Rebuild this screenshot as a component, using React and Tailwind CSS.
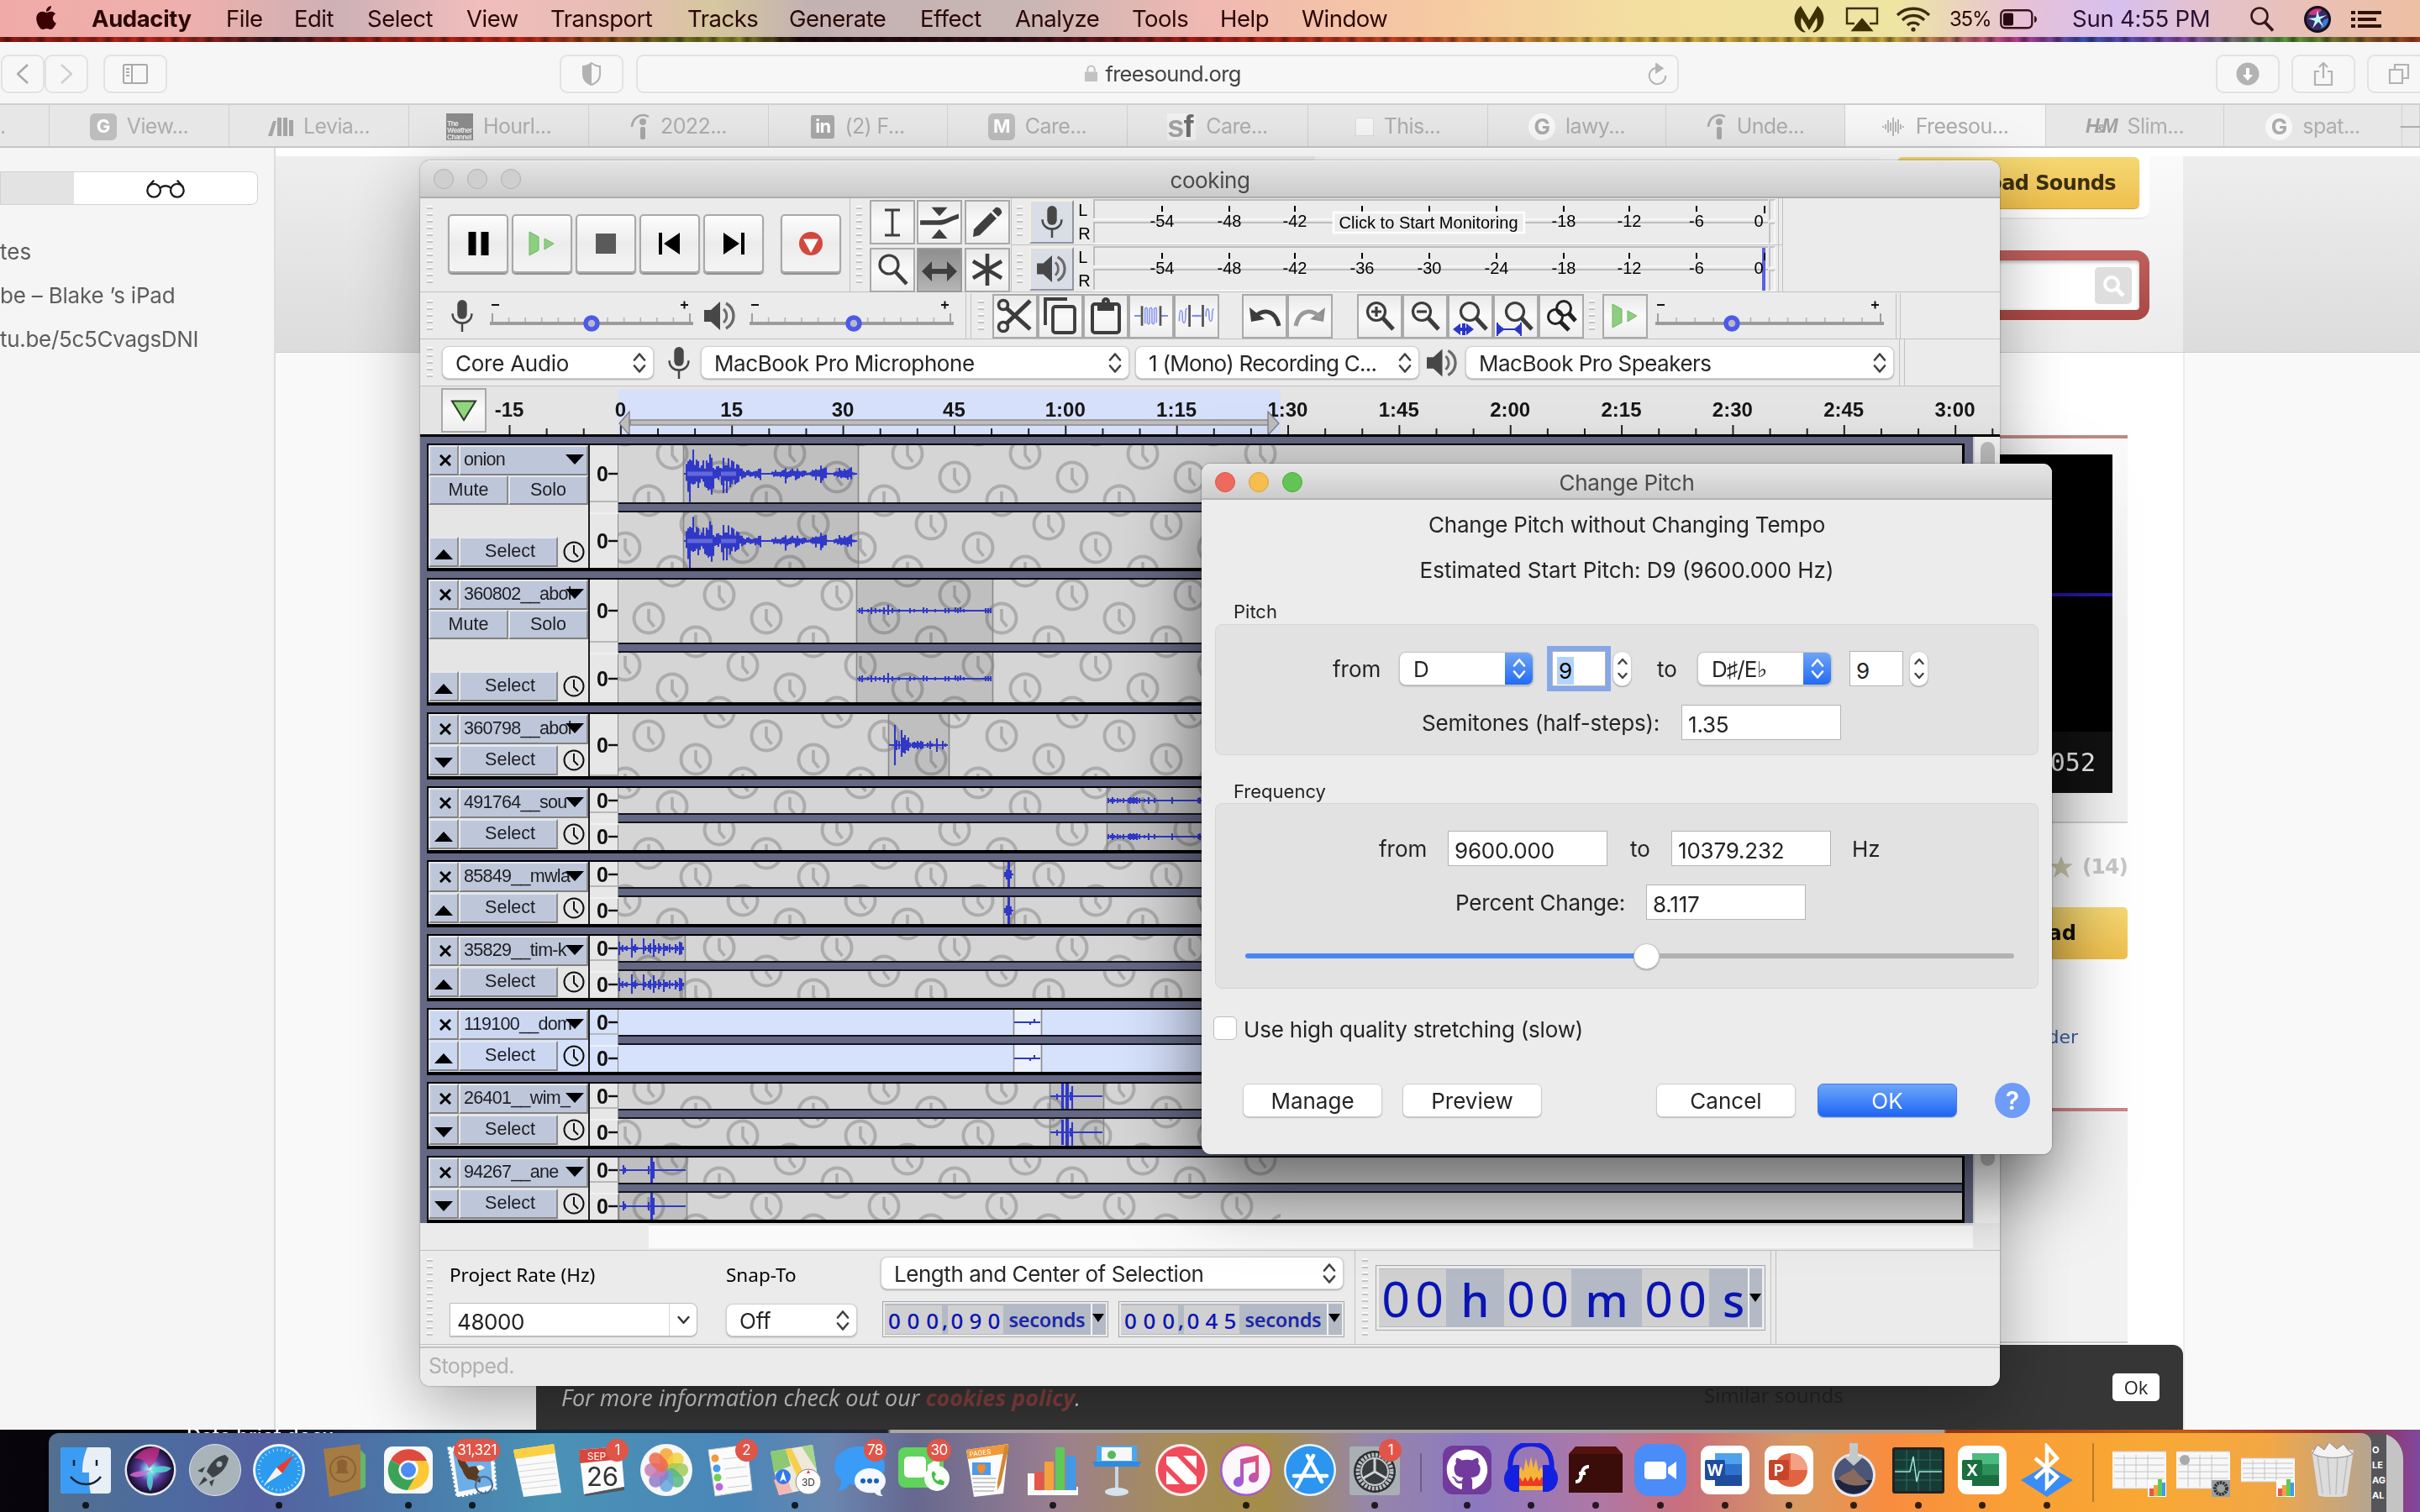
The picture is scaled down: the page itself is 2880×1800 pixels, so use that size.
import React from "react";
import { FaApple, FaGithub } from "react-icons/fa";

/* ---------- shared pieces ---------- */

const Grip = ({ n = 9, className = "" }) => (
  <div className={"flex w-[7px] shrink-0 flex-col gap-[6px] " + className}>
    {Array.from({ length: n }, (_, i) => (
      <div key={i} className="h-[2px] w-[7px] bg-[#c4c4c4] shadow-[0_-2px_0_#fafafa]" />
    ))}
  </div>
);

const VSep = ({ className = "" }) => <div className={"w-px shrink-0 self-stretch bg-[#c2c2c2] " + className} />;

const MicIcon = ({ className = "" }) => (
  <svg viewBox="0 0 28 42" className={className}>
    <rect x="8" y="1" width="12" height="24" rx="6" fill="#474747" />
    <path d="M2 18c0 16 24 16 24 0M14 30v11" fill="none" stroke="#474747" strokeWidth="2.6" />
  </svg>
);

const SpeakerIcon = ({ className = "" }) => (
  <svg viewBox="0 0 38 36" className={className}>
    <path d="M0 11h8L19 1v34L8 25H0z" fill="#474747" />
    <path d="M23 10c5 4 5 12 0 16" fill="none" stroke="#6a6a6a" strokeWidth="3" />
    <path d="M26 3c12 7 12 23 0 30" fill="none" stroke="#6a6a6a" strokeWidth="3.4" />
  </svg>
);

const UpDown = ({ className = "" }) => (
  <svg viewBox="0 0 16 24" className={className} fill="none" stroke="currentColor" strokeWidth="2.6" strokeLinecap="round" strokeLinejoin="round">
    <path d="M2 8.500l6-7 6 7M2 15.500l6 7 6-7" />
  </svg>
);

const Popup = ({ children, className = "" }) => (
  <div className={"flex h-[39px] shrink-0 items-center justify-between rounded-[8px] border border-[#cfcfcf] bg-white pt-[2px] pl-[15px] pr-[8px] text-[26px] tracking-[-0.250px] text-[#262626] shadow-[0_1px_2px_rgba(0,0,0,0.3)] " + className}>
    <span className="whitespace-nowrap">{children}</span>
    <UpDown className="-mt-[2px] h-[24px] w-[16px] shrink-0 text-[#404040]" />
  </div>
);

/* ---------- menu bar ---------- */

const menus = [
  ["File", "w-[81px]"], ["Edit", "w-[87px]"], ["Select", "w-[118px]"], ["View", "w-[100px]"],
  ["Transport", "w-[163px]"], ["Tracks", "w-[121px]"], ["Generate", "w-[156px]"], ["Effect", "w-[113px]"],
  ["Analyze", "w-[139px]"], ["Tools", "w-[105px]"], ["Help", "w-[97px]"], ["Window", "w-[120px]"],
];

const MenuBar = () => (
  <div className="flex h-[44px] items-center bg-[linear-gradient(90deg,#f0aba8_0px,#eeb0ac_220px,#cdb1b5_400px,#f1bdbd_570px,#e6bdb2_740px,#d5c79f_850px,#c3b2b2_960px,#c8b6b4_1220px,#f0b8b2_1430px,#f6c9a2_1700px,#f3dfa0_1950px,#eee5a3_2260px,#e6c1d8_2410px,#d7c0ee_2520px,#e6c2c8_2640px,#edbfa2_2880px)] pt-[2px] pr-[46px] text-[27.500px] text-[#2a0806]">
    <div className="flex w-[109px] shrink-0 pl-[41px]"><FaApple className="-mt-1 h-[32px] w-[28px] text-[#3a0303]" /></div>
    <div className="w-[160px] shrink-0 text-[27.500px] font-bold tracking-[-0.4px]">Audacity</div>
    {menus.map(([m, w]) => (
      <div key={m} className={"shrink-0 whitespace-nowrap tracking-[-0.5px] " + w}>{m}</div>
    ))}
    <div className="grow" />
    <svg viewBox="0 0 36 32" className="mr-[25px] h-[32px] w-[36px]">
      <path d="M8 0l10 17L28 0c9 8 10 20 2 28-3 3-6 4-8 3 5-3 7-9 5-17l-9 15-9-15c-2 8 0 14 5 17-2 1-5 0-8-3C-2 20-1 8 8 0z" fill="#3e3100" />
    </svg>
    <svg viewBox="0 0 40 30" className="mr-[20px] h-[30px] w-[40px]" fill="none" stroke="#3e3100" strokeWidth="2.400">
      <path d="M11 20H2V2h36v18h-9" /><path d="M20 15l11 13H9z" fill="#3e3100" />
    </svg>
    <svg viewBox="0 0 42 30" className="mr-[22px] h-[30px] w-[42px]" fill="none" stroke="#3e2b10" strokeWidth="3.400">
      <path d="M2 10a27 27 0 0 1 38 0M8 16a18 18 0 0 1 26 0M14 22a10 10 0 0 1 14 0" /><circle cx="21" cy="27" r="2.600" fill="#3e2b10" stroke="none" />
    </svg>
    <div className="w-[60px] shrink-0 text-[24px] tracking-[-1.200px]">35%</div>
    <svg viewBox="0 0 46 24" className="mr-[40px] h-[24px] w-[46px]">
      <rect x="1.300" y="1.300" width="37" height="21" rx="5" fill="none" stroke="#3a1018" strokeWidth="2.400" />
      <rect x="4" y="4.500" width="12" height="15" rx="2" fill="#2a0a12" /><path d="M41 8c4 1 4 7 0 8z" fill="#3a1018" />
    </svg>
    <div className="w-[210px] shrink-0 whitespace-nowrap tracking-[-0.250px] text-[#2a1030]">Sun 4:55 PM</div>
    <svg viewBox="0 0 32 30" className="mr-[34px] h-[30px] w-[32px]" fill="none" stroke="#35151a" strokeWidth="2.600">
      <circle cx="13" cy="11" r="9.500" /><path d="M19.500 18.500L29 28.500" strokeWidth="3.600" />
    </svg>
    <svg viewBox="0 0 32 32" className="mr-[24px] h-[32px] w-[32px] shrink-0">
      <circle cx="16" cy="16" r="16" fill="#141018" /><circle cx="16" cy="16" r="13" fill="#3a2a66" />
      <path d="M5 10a13 13 0 0 1 16-6c-2 6-8 8-16 6z" fill="#d2357f" /><path d="M20 27c6-2 9-7 9-12-6 0-9 6-9 12z" fill="#3a7bd8" />
      <path d="M16 5l2 8 9-2-8 5 4 9-6-6-7 8 3-9-8-3 9-1z" fill="#b9fbf3" />
    </svg>
    <svg viewBox="0 0 36 22" className="h-[22px] w-[36px] shrink-0" fill="#2e1200">
      <path d="M0 1h5v4H0zM8 1h28v4H8zM0 9h5v4H0zM8 9h22v4H8zM0 17h5v4H0zM8 17h28v4H8z" />
    </svg>
  </div>
);

/* ---------- browser ---------- */

const tabs = [
  ["w-[59px]", "none", "."], ["w-[214px]", "G", "View..."], ["w-[214px]", "bars", "Levia..."], ["w-[214px]", "wc", "Hourl..."],
  ["w-[214px]", "i", "2022..."], ["w-[213px]", "in", "(2) F..."], ["w-[214px]", "M", "Care..."], ["w-[215px]", "sf", "Care..."],
  ["w-[214px]", "page", "This..."], ["w-[212px]", "Gc", "lawy..."], ["w-[213px]", "i", "Unde..."], ["w-[239px]", "wave", "Freesou..."],
  ["w-[212px]", "hm", "Slim..."], ["w-[212px]", "Gc", "spat..."], ["w-[21px]", "none", "—"],
];

const TabIcon = ({ k }) => {
  switch (k) {
    case "G":
    case "M":
      return <div className="flex h-[32px] w-[32px] items-center justify-center rounded-[6px] bg-[#bdbdbd] text-[22px] font-bold text-white">{k}</div>;
    case "in":
      return <div className="flex h-[28px] w-[28px] items-center justify-center rounded-[3px] bg-[#a8a8a8] text-[22px] font-bold text-white">in</div>;
    case "bars":
      return <svg viewBox="0 0 30 24" className="h-[24px] w-[30px]" fill="#a4a4a4"><path d="M0 23L6 5h4L5 23zM11 1h5v22h-5zM18 1h5v22h-5zM25 4h5v19h-5z" /></svg>;
    case "wc":
      return <div className="flex h-[32px] w-[32px] flex-col justify-end bg-[#8b8b8b] pl-[1px] text-[8px] leading-[8px] font-bold text-[#e8e8e8]"><span>The</span><span className="tracking-[-0.5px]">Weather</span><span className="tracking-[-0.5px]">Channel</span></div>;
    case "i":
      return <svg viewBox="0 0 24 32" className="h-[32px] w-[24px]"><path d="M2 16C3 4 14-1 22 4" fill="none" stroke="#a8a8a8" strokeWidth="2.500" /><circle cx="15" cy="10" r="4" fill="#a8a8a8" /><rect x="12" y="16" width="6" height="15" rx="2" fill="#a8a8a8" /></svg>;
    case "sf":
      return <div className="flex h-[32px] w-[34px] items-center bg-[#f0f0f0] font-['Liberation_Sans'] text-[36px] font-bold tracking-[-1px] text-[#a2a2a2]">s<span className="text-[#6c6c6c]">f</span></div>;
    case "page":
      return <div className="h-[22px] w-[22px] border border-[#ddd] bg-[#f5f5f5]" />;
    case "Gc":
      return <div className="flex h-[32px] w-[32px] items-center justify-center rounded-full bg-[#f7f7f7] text-[26px] font-bold text-[#ababab]">G</div>;
    case "wave":
      return <svg viewBox="0 0 26 24" className="h-[24px] w-[26px]" stroke="#b8b8b8" strokeWidth="2" ><path d="M1 11v2M4 9v6M7 4v15M10 7v10M13 1v22M16 6v12M19 3v17M22 9v6M25 11v2" /></svg>;
    case "hm":
      return <div className="pr-[3px] font-['Liberation_Sans'] text-[23px] font-bold tracking-[-4px] text-[#a0a0a0] italic">H<span className="text-[15px]">&amp;</span>M</div>;
    default:
      return null;
  }
};

const ToolBtn = ({ className = "", children }) => (
  <div className={"flex h-[46px] shrink-0 items-center justify-center rounded-[9px] border-2 border-[#e2e2e2] bg-[#f7f7f7] " + className}>{children}</div>
);

const BrowserBar = () => (
  <div className="flex h-[75px] items-center border-b-2 border-[#cfcfcf] bg-[#f6f6f6] pt-[2px]">
    <ToolBtn className="ml-px w-[52px]"><svg viewBox="0 0 14 24" className="h-[24px] w-[14px]" fill="none" stroke="#a8a8a8" strokeWidth="2.600"><path d="M13 1L1 12l12 11" /></svg></ToolBtn>
    <ToolBtn className="w-[52px]"><svg viewBox="0 0 14 24" className="h-[24px] w-[14px]" fill="none" stroke="#cfcfcf" strokeWidth="2.600"><path d="M1 1l12 11L1 23" /></svg></ToolBtn>
    <ToolBtn className="ml-[18px] w-[76px]">
      <svg viewBox="0 0 30 24" className="h-[24px] w-[30px]" fill="none" stroke="#a9a9a9" strokeWidth="2"><rect x="1" y="1" width="28" height="22" rx="1.500" /><path d="M11 1v22M4 6h4M4 10h4M4 14h4" /></svg>
    </ToolBtn>
    <ToolBtn className="ml-[467px] w-[76px]">
      <svg viewBox="0 0 24 28" className="h-[28px] w-[24px]"><path d="M12 1c4 3 7 4 10 4v10c0 6-5 10-10 12C7 25 2 21 2 15V5c3 0 6-1 10-4z" fill="none" stroke="#b2b2b2" strokeWidth="2" /><path d="M12 1v26C7 25 2 21 2 15V5c3 0 6-1 10-4z" fill="#b2b2b2" /></svg>
    </ToolBtn>
    <ToolBtn className="relative ml-[15px] w-[1241px]">
      <svg viewBox="0 0 18 22" className="ml-[12px] mr-[8px] h-[21px] w-[17px]"><rect x="1" y="9" width="16" height="12" rx="1" fill="#c2c2c2" /><path d="M4.500 9V6a4.500 4.500 0 0 1 9 0v3" fill="none" stroke="#c2c2c2" strokeWidth="2.200" /></svg>
      <span className="pt-[2px] text-[25.500px] tracking-[-0.700px] text-[#444]">freesound.org</span>
      <svg viewBox="0 0 26 28" className="absolute right-[12px] h-[26px] w-[24px]" fill="none" stroke="#b5b5b5" strokeWidth="2.200"><path d="M18 7a10.500 10.500 0 1 0 6 9" /><path d="M12 1l8 6-8 5z" fill="#b5b5b5" /></svg>
    </ToolBtn>
    <ToolBtn className="ml-[639px] w-[76px]">
      <svg viewBox="0 0 28 28" className="h-[28px] w-[28px]"><circle cx="14" cy="14" r="13.500" fill="#b3b3b3" /><path d="M12 7h4v8h4l-6 7-6-7h4z" fill="#fff" /></svg>
    </ToolBtn>
    <ToolBtn className="ml-[14px] w-[76px]">
      <svg viewBox="0 0 24 30" className="h-[30px] w-[24px]" fill="none" stroke="#b3b3b3" strokeWidth="2.200"><path d="M7 12H2v16h20V12h-5M12 20V2M7 7l5-5 5 5" /></svg>
    </ToolBtn>
    <ToolBtn className="ml-[14px] w-[76px]">
      <svg viewBox="0 0 26 26" className="h-[26px] w-[26px]" fill="none" stroke="#b3b3b3" strokeWidth="2.200"><path d="M2 8h15v16H2zM8 8V2h16v16h-7" /></svg>
    </ToolBtn>
  </div>
);

const TabBar = () => (
  <div className="flex h-[51px] overflow-hidden border-b-2 border-[#c6c6c6]">
    {tabs.map(([w, k, t], i) => (
      <div key={i} className={"flex shrink-0 items-center justify-center border-r border-[#d0d0d0] pt-[2px] text-[25px] tracking-[-0.600px] text-[#adadad] " + w + " " + (i === 0 ? "!justify-start " : "") + (k === "wave" ? "gap-[14px] bg-[#f6f6f6]" : "gap-[12px] bg-[#e7e7e7]")}>
        <TabIcon k={k} />
        <span className="whitespace-nowrap">{t}</span>
      </div>
    ))}
  </div>
);

const Sidebar = () => (
  <div className="h-[1526px] w-[328px] shrink-0 border-r-2 border-[#dcdcdc] bg-[#f5f5f5] text-[26px] text-[#5d5d5d]">
    <div className="mt-[28px] flex h-[40px] w-[307px] overflow-hidden rounded-r-[8px] border border-[#d2d2d2] bg-white">
      <div className="w-[87px] bg-[#e3e3e3]" />
      <div className="flex grow items-center justify-center">
        <svg viewBox="0 0 54 26" className="h-[24px] w-[52px]" fill="none" stroke="#1b1b1b" strokeWidth="2.500"><circle cx="12" cy="16" r="8.500" /><circle cx="42" cy="16" r="8.500" /><path d="M20 13c4-4 10-4 14 0M4 12L12 3M50 12L42 3" /></svg>
      </div>
    </div>
    <div className="mt-[36px] h-[38px]">tes</div>
    <div className="mt-[14px] h-[38px] whitespace-nowrap tracking-[-0.200px]">be – Blake ’s iPad</div>
    <div className="mt-[14px] h-[38px] whitespace-nowrap tracking-[-0.300px]">tu.be/5c5CvagsDNI</div>
  </div>
);

const WebPage = () => (
  <div className="relative h-[1526px] grow overflow-hidden bg-[#f9f9f9]">
    <div className="h-[10px] bg-white" />
    <div className="flex h-[234px] border-b border-[#d0d0d0] bg-gradient-to-b from-[#eeeeee] to-[#dcdcdc]">
      <div className="ml-[1237px] flex w-[1033px] flex-col items-end bg-gradient-to-b from-[#fafafa] to-[#ebebeb] pr-[40px] font-['DejaVu_Sans']">
        <div className="flex h-[75px] w-[320px] justify-end rounded-b-[10px] border-b-2 border-[#e8e8e8] bg-white pr-[12px]">
          <div className="mt-[1px] flex h-[61px] w-[288px] items-center justify-end rounded-[6px] bg-gradient-to-b from-[#f5d874] to-[#efbf4b] pr-[28px] text-[24px] font-bold tracking-[-0.600px] whitespace-nowrap text-[#3b2f10] shadow-[0_1px_1px_#c99a30]">Upload Sounds</div>
        </div>
        <div className="mt-[37px] flex h-[83px] w-[700px] rounded-[16px] bg-gradient-to-b from-[#c0605d] to-[#a94744] p-[12px]">
          <div className="flex grow items-center justify-end rounded-[4px] bg-white pr-[9px] shadow-[inset_0_2px_4px_rgba(0,0,0,0.3)]">
            <div className="flex h-[44px] w-[44px] items-center justify-center rounded-[5px] bg-[#dedede]">
              <svg viewBox="0 0 28 28" className="h-[28px] w-[28px]" fill="none" stroke="#fff" strokeWidth="4"><circle cx="12" cy="12" r="8" /><path d="M18 18l8 8" strokeWidth="5" /></svg>
            </div>
          </div>
        </div>
      </div>
    </div>
    <div className="ml-[310px] flex h-[1282px] w-[1962px] flex-col items-end border-r-2 border-[#ececec] bg-white pr-[66px] font-['DejaVu_Sans']">
      <div className="mt-[98px] h-[462px] w-[1200px] border-t-4 border-b-2 border-t-[#c08886] border-b-[#d0d0d0] bg-gradient-to-b from-[#fafafa] via-[#f2f2f2] to-[#f2f2f2] pt-[19px] pr-[18px]">
        <div className="flex h-[330px] items-center bg-black pt-[76px]"><div className="-mt-[72px] h-[4px] w-full bg-[#2a16a8]" /></div>
        <div className="flex h-[73px] items-center justify-end bg-[#111] pr-[20px] font-['DejaVu_Sans_Mono'] text-[30px] text-[#f0f0f0]">00:00:052</div>
      </div>
      <div className="mt-[32px] flex h-[40px] items-center gap-[8px] text-[25px] font-bold text-[#c8c8c8]">
        <svg viewBox="0 0 68 32" className="h-[30px] w-[64px]" fill="#cfcdb0"><path d="M16 2l4 10h11l-9 7 4 11-10-7-10 7 4-11-9-7h11zM50 2l4 10h11l-9 7 4 11-10-7-10 7 4-11-9-7h11z" /></svg>
        <span className="tracking-[-0.900px]">(14)</span>
      </div>
      <div className="mt-[28px] flex h-[62px] w-[320px] items-center justify-end rounded-[5px] bg-gradient-to-b from-[#f5d874] to-[#efbf4b] pr-[61px] text-[24px] font-bold text-[#111]">Download</div>
      <div className="mt-[76px] h-[36px] pr-[59px] text-[22px] text-[#3a62a8]">Report uploader</div>
      <div className="mt-[65px] h-[280px] w-[1100px] border-t-4 border-b-2 border-t-[#c9858a] border-b-[#cccccc] bg-[#f2f2f2]" />
    </div>
    <div className="absolute bottom-0 left-[310px] h-[101px] w-[1960px] rounded-tr-[12px] bg-[#363636] font-['Open_Sans']">
      <div className="flex items-start justify-between pt-[34px] pr-[28px]">
        <div className="mt-[9px] pl-[30px] text-[27px] leading-[40px] font-medium whitespace-nowrap text-[#d2d2d2] italic">For more information check out our <span className="font-bold text-[#84403f]">cookies policy</span>.</div>
        <div className="flex h-[33px] w-[56px] items-center justify-center rounded-[5px] bg-white text-[22px] text-[#222]">Ok</div>
      </div>
    </div>
    <div className="absolute bottom-[26px] left-[1700px] font-['Noto_Sans'] text-[24px] leading-[30px] text-[#252528]">Similar sounds</div>
  </div>
);

/* ---------- audio editor toolbars ---------- */

const BigBtn = ({ children, className = "" }) => (
  <div className={"-mt-[3px] flex h-[70px] w-[72px] shrink-0 items-center justify-center rounded-[5px] border-2 border-[#a8a8a8] bg-gradient-to-b from-[#fdfdfd] via-[#ececec] to-[#f4f4f4] shadow-[0_2px_1px_#8f8f8f] " + className}>{children}</div>
);

const Tile = ({ children, pressed, className = "" }) => (
  <div className={"flex h-[53px] w-[54px] shrink-0 items-center justify-center border-2 bg-gradient-to-b " + (pressed ? "border-[#9a9a9a] from-[#8f8f8f] via-[#a0a0a0] to-[#b5b5b5] " : "border-[#a9a9a9] from-[#e9e9e9] via-[#fafafa] to-[#ededed] ") + className}>{children}</div>
);

const PlayAt = () => (
  <svg viewBox="0 0 32 30" className="h-[30px] w-[32px]"><path d="M1 1l11 6v16L1 29z" fill="#8ccf7f" stroke="#6fb562" /><path d="M19 9l11 6-11 7z" fill="#8ccf7f" stroke="#77b56b" /></svg>
);

const meterTicks = [["-54", 82], ["-48", 162], ["-42", 240], ["-36", 320], ["-30", 400], ["-24", 480], ["-18", 560], ["-12", 638], ["-6", 718]];

const Meter = ({ play }) => (
  <div className="flex h-[56px] items-center border-b border-[#c2c2c2]">
    <Grip n={5} className="ml-[6px]" />
    <div className="ml-[8px] flex h-[52px] w-[54px] items-center justify-center border-2 border-t-[#f4efdc] border-r-[#8f95a3] border-b-[#8f95a3] border-l-[#f4efdc] bg-[#d9dde6]">
      {play ? <SpeakerIcon className="h-[34px] w-[36px]" /> : <MicIcon className="h-[40px] w-[28px]" />}
    </div>
    <div className="ml-[5px] flex h-[52px] w-[18px] flex-col justify-between font-['Liberation_Sans'] text-[20px] leading-[24px] text-black"><span>L</span><span>R</span></div>
    <div className="h-[54px] w-[804px]">
      <svg viewBox="0 0 804 54" className="h-[54px] w-[804px] font-['Liberation_Sans'] text-[20px]" textAnchor="middle">
        <path d="M1 25V1h802" fill="none" stroke="#bdbdbd" strokeWidth="2" />
        <path d="M0 24h802" stroke="#f6f6f6" strokeWidth="2" /><path d="M1 53V28h802" fill="none" stroke="#bdbdbd" strokeWidth="2" /><path d="M0 53h803" stroke="#f6f6fa" strokeWidth="2" />
        {meterTicks.map(([t, x]) => {
          const hidden = !play && (t === "-36" || t === "-30" || t === "-24");
          return (
            <g key={t}>
              <path d={"M" + x + " 8v7"} stroke="#000" strokeWidth="2" />
              {!hidden && <text x={x} y="33" fill="#000">{t}</text>}
            </g>
          );
        })}
        {play && <path d="M798 2v51" stroke="#5a62e0" strokeWidth="4" />}
        <path d="M799 8v9" stroke="#000" strokeWidth="2" /><text x="792" y="33" fill="#000">0</text>
        {!play && <g><rect x="286" y="16" width="227" height="24" fill="#ededed" stroke="#fff" strokeWidth="2.500" /><text x="399" y="35" textLength="213" fill="#000">Click to Start Monitoring</text></g>}
      </svg>
    </div>
    <div className="flex h-[54px] w-[8px] flex-col gap-[2px]"><div className="grow border-2 border-r-[#f6f6f6] border-b-[#f6f6f6] border-t-[#c4c4c4] border-l-[#c4c4c4]" /><div className="grow border-2 border-r-[#f6f6f6] border-b-[#f6f6f6] border-t-[#c4c4c4] border-l-[#c4c4c4]" /></div>
    <VSep className="ml-[3px]" /><VSep className="ml-[4px]" />
  </div>
);

const Slider = ({ w, thumb, className = "" }) => (
  <svg viewBox={"0 0 " + w + " 40"} width={w} height="40" className={"shrink-0 " + className}>
    <path d={"M2 7h9M" + (w - 15) + " 7h9M" + (w - 10.5) + " 2.500v9"} stroke="#111" strokeWidth="2" />
    {Array.from({ length: 13 }, (_, i) => {
      const x = 3 + (i * (w - 7)) / 12;
      return <path key={i} d={"M" + x + " 27v" + (i % 12 === 0 ? -10 : -5)} stroke={i % 12 === 0 ? "#8c8c8c" : "#b4b4b4"} strokeWidth="1.600" />;
    })}
    <rect x="0" y="27" width={w} height="4" fill="#9b9b9b" />
    <circle cx={thumb} cy="29" r="7" fill="#b9b9c8" stroke="#4d5ae8" strokeWidth="5.500" />
  </svg>
);

const S = { fill: "none", stroke: "#3d3d3d", strokeWidth: 3.2 };
const Lens = ({ children, x = 20 }) => (
  <svg viewBox="0 0 50 50" className="h-[50px] w-[50px] shrink-0"><circle cx={x} cy="20" r="10.500" {...S} /><path d={"M" + (x + 8) + " 28l12 13"} stroke="#3d3d3d" strokeWidth="5" />{children}</svg>
);

const Toolbars = () => (
  <div className="bg-[#ebebeb]">
    <div className="flex h-[112px] border-b border-[#c2c2c2]">
      <Grip n={12} className="ml-[8px] self-center" />
      <div className="flex items-center">
        <BigBtn className="ml-[18px]"><svg viewBox="0 0 24 28" className="h-[28px] w-[25px]"><path d="M0 0h9v28H0zM15 0h9v28h-9z" /></svg></BigBtn>
        <BigBtn className="ml-[4px]"><PlayAt /></BigBtn>
        <BigBtn className="ml-[4px]"><div className="h-[24px] w-[24px] bg-[#5a5a5a]" /></BigBtn>
        <BigBtn className="ml-[4px]"><svg viewBox="0 0 26 26" className="h-[26px] w-[26px]"><path d="M0 0h4v26H0zM25 0v26L6 13z" /></svg></BigBtn>
        <BigBtn className="ml-[4px]"><svg viewBox="0 0 26 26" className="h-[26px] w-[26px]"><path d="M22 0h4v26h-4zM1 0v26l19-13z" /></svg></BigBtn>
        <BigBtn className="ml-[20px]"><svg viewBox="0 0 28 28" className="h-[28px] w-[28px]"><circle cx="14" cy="14" r="14" fill="#d1483f" /><path d="M5 8.500h18L14 25z" fill="#fff" /></svg></BigBtn>
      </div>
      <VSep className="ml-[10px]" />
      <Grip n={12} className="ml-[7px] self-center" />
      <div className="mt-[2px] ml-[9px] grid h-[110px] w-[167px] grid-cols-3 gap-x-[2px] gap-y-[3px]">
        <Tile><svg viewBox="0 0 24 34" className="h-[34px] w-[24px]" {...S} strokeWidth="2.800"><path d="M3 2h18M3 32h18M12 2v30" /></svg></Tile>
        <Tile><svg viewBox="0 0 50 44" className="h-[42px] w-[50px]" fill="#3f3f3f"><path d="M15 3h20l-10 11zM15 42h20L25 30zM1 19h22c10 0 14-4 26-8v6c-10 2-14 8-26 8H1z" /></svg></Tile>
        <Tile><svg viewBox="0 0 40 40" className="h-[40px] w-[40px]" fill="#3f3f3f"><path d="M3 37l1-9L24 8l7 7-20 20zM26 6l4-4c4-1 8 3 7 7l-4 4z" /></svg></Tile>
        <Tile><svg viewBox="0 0 40 40" className="h-[40px] w-[40px]"><circle cx="16" cy="14" r="11" {...S} /><path d="M24 23l13 14" stroke="#3d3d3d" strokeWidth="4.500" /></svg></Tile>
        <Tile pressed><svg viewBox="0 0 42 28" className="mt-[4px] h-[28px] w-[42px]" fill="#3f3f3f"><path d="M0 14L12 2v9h18V2l12 12-12 12v-9H12v9z" /></svg></Tile>
        <Tile><svg viewBox="0 0 40 40" className="h-[40px] w-[40px]" stroke="#3d3d3d" strokeWidth="4.600"><path d="M20 1v38M3 10l34 20M3 30l34-20" /></svg></Tile>
      </div>
      <VSep className="ml-[1px]" />
      <div className="w-[918px]"><Meter /><Meter play /></div>
    </div>

    <div className="flex h-[56px] items-center border-b border-[#c2c2c2] pt-[1px]">
      <Grip n={5} className="ml-[8px]" />
      <MicIcon className="ml-[21px] h-[40px] w-[28px]" />
      <Slider w={242} thumb={121} className="ml-[19px]" />
      <SpeakerIcon className="ml-[13px] h-[36px] w-[38px]" />
      <Slider w={243} thumb={124} className="ml-[16px]" />
      <VSep className="ml-[14px]" /><VSep className="ml-[5px]" />
      <Grip n={5} className="ml-[8px]" />
      <div className="ml-[10px] flex">
        <Tile><svg viewBox="0 0 44 44" className="h-[44px] w-[44px]" {...S} strokeWidth="3.600"><circle cx="8" cy="9" r="5.500" /><circle cx="8" cy="35" r="5.500" /><path d="M12 13l28 25M12 31L40 4" strokeWidth="5" /></svg></Tile>
        <Tile><svg viewBox="0 0 44 46" className="h-[46px] w-[44px]" {...S} strokeWidth="3.800"><path d="M4 34V3h26" /><rect x="13" y="12" width="26" height="31" rx="3" /></svg></Tile>
        <Tile><svg viewBox="0 0 44 46" className="h-[46px] w-[44px]" {...S} strokeWidth="4"><rect x="6" y="9" width="32" height="34" rx="3" /><path d="M14 9h16v6H14z" fill="#3d3d3d" /><circle cx="22" cy="6" r="3" /></svg></Tile>
        <Tile><svg viewBox="0 0 46 30" className="h-[28px] w-[42px]" fill="none" stroke="#8c9aec" strokeWidth="1.800"><path d="M1 15h9M36 15h9" stroke="#7f8fe6" strokeWidth="2.400" /><path d="M15 25V6q2-3 3 0v18q2 3 3 0V6q2-3 3 0v18q2 3 3 0V6q2-3 3 0v18" /><path d="M11 2v26M35 2v26" stroke="#555" strokeWidth="3" /></svg></Tile>
        <Tile><svg viewBox="0 0 46 30" className="h-[28px] w-[44px]" fill="none" stroke="#8c9aec" strokeWidth="1.800"><path d="M1 22q0-14 2-14t2 8 2 8 2-10 2-8M35 16q0-10 2-10t2 8 2 8 2-8 2-8" /><path d="M17 15h12" stroke="#7f8fe6" strokeWidth="2.400" /><path d="M14 1v28M31 1v28" stroke="#555" strokeWidth="3" /></svg></Tile>
      </div>
      <div className="ml-[27px] flex">
        <Tile><svg viewBox="0 0 42 28" className="h-[28px] w-[42px]"><path d="M3 4l2 17 16-3z" fill="#3d3d3d" /><path d="M8 17C16 6 33 4 38 26" {...S} strokeWidth="5" /></svg></Tile>
        <Tile><svg viewBox="0 0 42 28" className="h-[28px] w-[42px] -scale-x-100"><path d="M3 4l2 17 16-3z" fill="#8f8f8f" /><path d="M8 17C16 6 33 4 38 26" fill="none" stroke="#9a9a9a" strokeWidth="5" /></svg></Tile>
      </div>
      <div className="ml-[29px] flex">
        <Tile><Lens x={21}><path d="M15 20h12M21 14v12" {...S} /></Lens></Tile>
        <Tile><Lens x={21}><path d="M15 20h12" {...S} /></Lens></Tile>
        <Tile><Lens x={24}><path d="M4 41l9-7v5h2v-5h4v5h1v-5l9 7-9 7v-5h-1v5h-4v-5h-2v5z" fill="#2b36c8" /></Lens></Tile>
        <Tile><Lens x={24}><path d="M3 33v16M31 33v16M5 41h24M4 36l6 5-6 5zM30 36l-6 5 6 5z" fill="#2b36c8" stroke="#2b36c8" strokeWidth="2" /></Lens></Tile>
        <Tile><svg viewBox="0 0 50 50" className="h-[50px] w-[50px] shrink-0" fill="none" stroke="#222" strokeWidth="3"><circle cx="28" cy="16" r="8.500" /><circle cx="18" cy="26" r="8.500" /><path d="M34 22l8 9M24 32l10 10" strokeWidth="5" /></svg></Tile>
      </div>
      <Grip n={5} className="ml-[6px]" />
      <Tile className="ml-[9px]"><PlayAt /></Tile>
      <Slider w={272} thumb={91} className="ml-[9px]" />
      <VSep className="ml-[14px]" /><VSep className="ml-[4px]" />
    </div>

    <div className="flex h-[56px] items-center border-b border-[#c2c2c2]">
      <Grip n={5} className="ml-[8px]" />
      <Popup className="ml-[11px] w-[252px]">Core Audio</Popup>
      <MicIcon className="ml-[16px] h-[40px] w-[28px]" />
      <Popup className="ml-[12px] w-[510px] !tracking-[-0.400px]">MacBook Pro Microphone</Popup>
      <Popup className="ml-[7px] w-[338px] !tracking-[-0.700px]">1 (Mono) Recording C...</Popup>
      <SpeakerIcon className="ml-[9px] h-[36px] w-[37px]" />
      <Popup className="ml-[9px] w-[510px] !tracking-[-0.500px]">MacBook Pro Speakers</Popup>
      <VSep className="ml-[6px]" /><VSep className="ml-[5px]" />
    </div>
  </div>
);

/* ---------- timeline ---------- */

const rulerLabels = ["-15", "0", "15", "30", "45", "1:00", "1:15", "1:30", "1:45", "2:00", "2:15", "2:30", "2:45", "3:00"];

const Ruler = () => (
  <div className="flex h-[60px] border-b-[3px] border-black bg-[#e4e4e4]">
    <Tile className="mt-[2px] ml-[25px]"><svg viewBox="0 0 32 26" className="h-[26px] w-[32px]"><path d="M2 1.500h28L16 24z" fill="#8fd67d" stroke="#2d3d2a" strokeWidth="2" /></svg></Tile>
    <svg viewBox="579 460 1801 57" className="h-[57px] w-[1801px] font-['Liberation_Sans'] text-[24px] font-bold" textAnchor="middle">
      <rect x="736" y="464" width="788" height="53" fill="#d6e0fb" />
      {Array.from({ length: 41 }, (_, i) => {
        const x = 606.5 + i * 44.12;
        return <path key={i} d={"M" + x + " 517v" + (i % 3 === 0 ? -11 : -7)} stroke="#222" strokeWidth="2" />;
      })}
      <path d="M750 500h760v6H750z" fill="#bdbdbd" stroke="#8a8a8a" strokeWidth="1.500" />
      {rulerLabels.map((t, i) => (
        <text key={t} x={606 + i * 132.35} y="496" fill="#161616">{t}</text>
      ))}
      <path d="M749 490v28l-12-14zM1509 490v28l13-14z" fill="#bdbdbd" stroke="#777" strokeWidth="1.200" />
    </svg>
  </div>
);

const hash = (n) => {
  const v = Math.sin(n * 12.9898) * 43758.5453;
  return v - Math.floor(v);
};

/* Builds two-pixel bars from an envelope of [x, peak] points. */
const bars = (env, mid, seed) => {
  let d = "";
  for (let x = env[0][0]; x <= env[env.length - 1][0]; x += 2) {
    let i = 0;
    while (i < env.length - 2 && env[i + 1][0] <= x) i++;
    const [x0, a0] = env[i];
    const [x1, a1] = env[i + 1];
    const a = a0 + ((a1 - a0) * (x - x0)) / Math.max(1, x1 - x0);
    const up = a * (0.35 + 0.65 * hash(x + seed) ** 1.6);
    const dn = a * (0.35 + 0.65 * hash(x * 3 + seed) ** 1.6);
    d += "M" + x + " " + (mid - up) + "V" + (mid + dn);
  }
  return d;
};

/* Isolated spikes, each [x, up, down]. */
const spikes = (list, mid) => list.map(([x, u, dn]) => "M" + x + " " + (mid - u) + "V" + (mid + (dn === undefined ? u : dn))).join("");

const onionEnv = [[79, 2], [82, 33], [84, 36], [90, 30], [94, 20], [104, 16], [112, 30], [114, 10], [122, 9], [124, 26], [132, 22], [142, 14], [146, 7], [160, 4], [169, 9], [170, 0], [182, 0], [184, 6], [197, 6], [198, 16], [201, 6], [212, 8], [222, 7], [224, 2], [228, 3], [230, 7], [240, 10], [242, 17], [246, 14], [248, 2], [256, 1], [258, 6], [266, 8], [276, 12], [279, 4], [284, 2]];
const quiet = [[287, 3], [290, 4], [297, 2], [301, 4], [306, 3], [311, 2], [316, 4], [321, 7, 5], [326, 3], [334, 2], [347, 3], [352, 2], [363, 4, 3], [367, 3], [377, 2], [389, 3], [393, 3], [401, 4, 2], [404, 3], [407, 4, 2], [411, 2], [437, 3], [440, 3], [443, 3]];
const quiet2 = [[583, 3], [586, 2], [588, 4], [590, 2], [594, 3], [597, 2], [601, 3], [607, 3], [609, 4], [611, 3], [613, 4], [615, 3], [617, 4], [620, 3], [626, 2], [631, 4], [638, 3], [659, 4], [690, 3], [692, 4]];
const dog = [[324, 1], [329, 24, 24], [331, 6], [334, 5], [337, 18, 14], [339, 9], [341, 12, 10], [343, 6], [345, 9, 7], [347, 3], [350, 3], [352, 4], [354, 3], [356, 5], [358, 3], [360, 5], [362, 4], [368, 3], [371, 5], [373, 2], [379, 8], [386, 5], [389, 2]];
const tick = [[460, 3], [462, 6], [464, 16], [465, 16], [467, 5], [469, 1]];
const taps = [[1, 8], [3, 2], [5, 4], [8, 2], [10, 3], [16, 12, 11], [18, 3], [20, 5], [22, 2], [30, 12, 7], [32, 3], [36, 4], [38, 6], [42, 11, 10], [44, 4], [48, 6], [50, 3], [54, 6, 9], [56, 3], [58, 3], [61, 5], [64, 2], [68, 5, 6], [70, 3], [73, 8], [75, 7], [77, 2]];
const dom = [[490, 1, 3], [495, 4, 1]];
const wim = [[522, 3, 4], [528, 15], [529, 15], [533, 16], [535, 16], [538, 5], [540, 12, 16]];
const ane = [[6, 6, 5], [8, 3], [36, 5], [39, 16], [40, 16], [42, 10]];

const tracks = [
  { name: "onion", top: 530, lanes: [[68, 34], [66, 34]], tall: true, up: true, clip: [77, 285], env: onionEnv },
  { name: "360802__abol", top: 690, lanes: [[75, 37], [59, 31]], tall: true, up: true, clip: [283, 445], hits: quiet },
  { name: "360798__abol", top: 850, lanes: [[74, 37]], clip: [321, 393], hits: dog },
  { name: "491764__sou", top: 938, lanes: [[30, 15], [32, 16]], up: true, clip: [581, 800], hits: quiet2 },
  { name: "85849__mwla", top: 1026, lanes: [[30, 15], [32, 16]], up: true, clip: [458, 471], hits: tick },
  { name: "35829__tim-k", top: 1114, lanes: [[30, 15], [32, 16]], up: true, clip: [0, 79], hits: taps },
  { name: "119100__dom", top: 1202, lanes: [[30, 15], [32, 16]], up: true, sel: true, clip: [470, 503], hits: dom },
  { name: "26401__wim_", top: 1290, lanes: [[30, 15], [32, 16]], clip: [513, 577], hits: wim },
  { name: "94267__ane", top: 1378, lanes: [[30, 15], [32, 16]], clip: [0, 81], hits: ane },
];

const Lane = ({ id, y, h, mid, t, seed }) => {
  const [a, b] = t.clip;
  return (
    <svg viewBox={"0 0 1599 " + h} width="1599" height={h} className="block overflow-hidden">
      <defs>
        <pattern id={id} width="140" height="140" patternUnits="userSpaceOnUse" patternTransform={"translate(0 " + (700 - y) + ")"}>
          {[0, 1, 2, 3, 4].flatMap((k) => {
            const cx = (36 + k * 56) % 140;
            const cy = (36 + k * 28) % 140;
            return [[0, 0], [-140, 0], [0, -140], [-140, -140], [140, 0], [0, 140]].map(([dx, dy]) => (
              <g key={k + "_" + dx + "_" + dy} fill="none" stroke="#cecece" strokeWidth="4">
                <circle cx={cx + dx} cy={cy + dy} r="17.500" />
                <path d={"M" + (cx + dx) + " " + (cy + dy - 11) + "v13l6.500 8"} strokeWidth="3.600" />
              </g>
            ));
          })}
        </pattern>
      </defs>
      <rect width="1599" height={h} fill="#d5d5d5" />
      {t.sel ? <rect width="788" height={h} fill="#d6e1fc" /> : null}
      <rect x={a} width={b - a} height={h} fill={t.sel ? "#ebf1fe" : "#bfbfbf"} />
      {t.sel ? null : <rect width="788" height={h} fill={"url(#" + id + ")"} className="mix-blend-multiply" />}
      <path d={"M" + (a + 0.5) + " 0v" + h + "M" + (b + 0.5) + " 0v" + h} stroke="#8a8a8a" strokeWidth="1.600" />
      <path d={"M" + (a + 1) + " " + mid + "H" + (b - 1)} stroke="#3038c8" strokeWidth="2" />
      <path d={t.env ? bars(t.env, mid, seed) : spikes(t.hits, mid)} stroke="#3038c8" strokeWidth="2.100" />
      {t.env && <path d={"M82 " + mid + "h30M122 " + mid + "h18"} stroke="#6468d8" strokeWidth="5" />}
    </svg>
  );
};

const Face = ({ children, sel, className = "" }) => (
  <div className={"flex shrink-0 items-center justify-center overflow-hidden border-2 border-t-[#e6e8ec] border-r-[#8b8b8b] border-b-[#808080] border-l-[#e6e8ec] " + (sel ? "bg-[#cbd7f1] " : "bg-[#bec7da] ") + className}>{children}</div>
);

const TrackRow = ({ t, index }) => (
  <div className={"mb-[8px] flex w-[1830px] shrink-0 border-t-2 border-r-[3px] border-b-4 border-l-2 border-black font-['Liberation_Sans'] text-[21.500px] text-[#1d1d22] " + (t.tall ? "h-[152px]" : "h-[80px]")}>
    <div className={"flex w-[192px] shrink-0 flex-col border-r-2 border-[#1e1e1e] " + (t.sel ? "bg-[#d6e1fc]" : "bg-[#e5e5e5]")}>
      <div className="flex">
        <Face sel={t.sel} className="h-[36px] w-[36px] pl-[3px]"><svg viewBox="0 0 14 14" className="h-[14px] w-[14px]" stroke="#000" strokeWidth="3"><path d="M1 1l12 12M13 1L1 13" /></svg></Face>
        <Face sel={t.sel} className="relative h-[36px] w-[154px] !justify-start pb-[2px] pl-[4px]">
          <span className="tracking-[-0.700px] whitespace-nowrap">{t.name}</span>
          <svg viewBox="0 0 22 12" className="absolute right-[3px] h-[12px] w-[22px]"><path d="M0 0h22L11 12z" /></svg>
        </Face>
      </div>
      {t.tall && (
        <div className="flex">
          <Face className="h-[35px] w-[95px]">Mute</Face>
          <Face className="h-[35px] w-[95px]">Solo</Face>
        </div>
      )}
      <div className="grow" />
      <div className="flex items-center pb-[1px]">
        <Face sel={t.sel} className="h-[36px] w-[36px]"><svg viewBox="0 0 22 12" className={"mt-[6px] h-[12px] w-[22px] " + (t.up ? "rotate-180" : "")}><path d="M0 0h22L11 12z" /></svg></Face>
        <Face sel={t.sel} className="h-[36px] w-[118px] pb-[2px] pl-[4px]">Select</Face>
        <svg viewBox="0 0 26 26" className="ml-[6px] h-[26px] w-[26px]" fill="none" stroke="#111" strokeWidth="2"><circle cx="13" cy="13" r="11.500" /><path d="M13 5v9l5 5" /></svg>
      </div>
    </div>
    <div className={"flex w-[34px] shrink-0 flex-col justify-between border-r border-[#8a8a8a] " + (t.sel ? "bg-[#d6e1fc]" : "bg-[#e7e7e7]")}>
      {t.lanes.map(([h, mid], i) => (
        <svg key={i} viewBox={"0 0 34 " + h} width="34" height={h} className="text-[25px] font-bold">
          <text x="8" y={mid + 9} fill="#111">0</text><path d={"M22 " + mid + "h11"} stroke="#111" strokeWidth="2.400" />
          <path d={"M0 " + (i ? 1 : h - 1) + "h34"} stroke={i ? "#f4f4f4" : "#a9a9a9"} strokeWidth="1.500" />
        </svg>
      ))}
    </div>
    <div className="flex flex-col">
      {t.lanes.map(([h, mid], i) => (
        <React.Fragment key={i}>
          {i === 1 && <div className="h-[12px] border-y-2 border-[#14141c] bg-[#646884]" />}
          <Lane id={"c" + index + i} y={t.top + (i ? t.lanes[0][0] + 12 : 0)} h={h} mid={mid} t={t} seed={index} />
        </React.Fragment>
      ))}
    </div>
  </div>
);

/* ---------- selection bar ---------- */

const Digits = ({ text, className }) => (
  <div className={"flex items-center justify-around bg-[#d0d0d0] " + className}>{text.split("").map((c, i) => <span key={i}>{c}</span>)}</div>
);

const TimeBox = ({ b, className = "" }) => (
  <div className={"h-[43px] w-[269px] border border-[#a5a5a5] bg-[#ececec] p-[2px] " + className}>
    <div className="flex h-full items-center bg-[#b4bac5] text-[26px] leading-none font-medium text-[#0a14b4]">
      <Digits text="000" className="h-[34px] w-[68px] pt-[2px]" />
      <span className="w-[7px]">,</span>
      <Digits text={b} className="h-[34px] w-[66px] pt-[2px]" />
      <span className="w-[104px] pt-[2px] text-center text-[23.500px] font-semibold tracking-[-0.300px] text-[#1c28a8]">seconds</span>
      <div className="flex h-full grow items-center border-l-2 border-[#f4f4f4]"><svg viewBox="0 0 14 10" className="-mt-[4px] h-[10px] w-[14px]"><path d="M0 0h14L7 10z" /></svg></div>
    </div>
  </div>
);

const SelectionBar = () => (
  <div className="flex h-[113px] border-y border-[#c2c2c2] bg-[#ebebeb]">
    <Grip n={12} className="ml-[8px] self-center" />
    <div className="ml-[20px] w-[329px]">
      <div className="mt-[12px] h-[34px] font-['Noto_Sans'] text-[22.500px] text-black">Project Rate (Hz)</div>
      <div className="mt-[16px] flex h-[40px] w-[295px] items-center rounded-r-[8px] border border-[#bdbdbd] bg-white pl-[8px] text-[26px] text-[#222] shadow-[0_1px_1px_rgba(0,0,0,0.2)]">
        <span className="grow pt-[5px] tracking-[-0.400px]">48000</span>
        <div className="flex h-full w-[33px] items-center justify-center border-l border-[#d8d8d8]"><svg viewBox="0 0 16 10" className="h-[10px] w-[15px]" fill="none" stroke="#333" strokeWidth="2.600"><path d="M1 1l7 8 7-8" /></svg></div>
      </div>
    </div>
    <div className="w-[184px]">
      <div className="mt-[12px] h-[34px] font-['Noto_Sans'] text-[22.500px] text-black">Snap-To</div>
      <Popup className="mt-[17px] w-[156px]">Off</Popup>
    </div>
    <div className="w-[564px] font-['Noto_Sans']">
      <div className="mt-[7px] font-['Inter']"><Popup className="w-[551px] !tracking-[-0.450px]">Length and Center of Selection</Popup></div>
      <div className="mt-[14px] ml-[2px] flex gap-[12px]"><TimeBox b="090" /><TimeBox b="045" /></div>
    </div>
    <VSep /><Grip n={12} className="ml-[8px] self-center" />
    <div className="mt-[17px] ml-[9px] h-[78px] w-[464px] border border-[#a5a5a5] bg-[#ececec] p-[3px] font-['Noto_Sans']">
      <div className="flex h-full items-center bg-[#b4bac5] text-[59px] leading-none text-[#0a14b4]">
        <Digits text="00" className="h-[68px] w-[80px]" /><span className="w-[69px] pt-[4px] text-center text-[54px] font-medium">h</span>
        <Digits text="00" className="h-[68px] w-[80px]" /><span className="w-[84px] pt-[4px] text-center text-[54px] font-medium">m</span>
        <Digits text="00" className="h-[68px] w-[80px]" /><span className="w-[46px] pt-[4px] pl-[12px] text-center text-[54px] font-medium">s</span>
        <div className="flex h-full grow items-center border-l-2 border-[#f4f4f4]"><svg viewBox="0 0 14 10" className="h-[10px] w-[14px]"><path d="M0 0h14L7 10z" /></svg></div>
      </div>
    </div>
    <VSep className="ml-[6px]" /><VSep className="ml-[5px]" />
  </div>
);

const EditorWindow = () => (
  <div className="absolute top-[191px] left-[500px] h-[1459px] w-[1880px] overflow-hidden rounded-[12px] bg-[#ebebeb]">
    <div className="relative flex h-[45px] items-center border-t border-b-2 border-t-[#f4f4f4] border-b-[#acacac] bg-gradient-to-b from-[#e4e4e4] to-[#cbcbcb] pl-[16px]">
      <div className="flex gap-[16px]">{[0, 1, 2].map((i) => <div key={i} className="h-[24px] w-[24px] rounded-full border border-[#b0b0b0] bg-[#cfcfcf]" />)}</div>
      <div className="absolute inset-x-0 pt-[3px] text-center text-[26px] tracking-[-0.400px] text-[#4a4a4a]">cooking</div>
    </div>
    <Toolbars />
    <Ruler />
    <div className="flex h-[936px]">
      <div className="w-[1848px] bg-[#646884] pt-[8px] pl-[8px]">{tracks.map((t, i) => <TrackRow key={t.name} t={t} index={i} />)}</div>
      <div className="flex w-[32px] flex-col items-center border-l-2 border-[#d8d8d8] bg-[#f4f4f4] pt-[6px]"><div className="h-[862px] w-[17px] rounded-full bg-[#bdbdbd]" /></div>
    </div>
    <div className="h-[32px] bg-[#ebebeb]"><div className="ml-[272px] h-[30px] w-[1576px] border-t-[3px] border-[#dfdfdf] bg-[#fafafa]" /></div>
    <SelectionBar />
    <div className="mt-[2px] h-[50px] border-t-2 border-[#c2c2c2] pt-[3px] pl-[10px] text-[25px] tracking-[-0.600px] text-[#b0b0b0]">Stopped.</div>
  </div>
);

/* ---------- dialog ---------- */

const Combo = ({ children }) => (
  <div className="flex h-[40px] w-[160px] shrink-0 items-center justify-between overflow-hidden rounded-[8px] border border-[#c6c6c6] bg-white pl-[16px] shadow-[0_1px_2px_rgba(0,0,0,0.25)]">
    <span className="tracking-[-0.800px] whitespace-nowrap">{children}</span>
    <div className="flex h-[40px] w-[33px] items-center justify-center bg-gradient-to-b from-[#6fa4f6] to-[#1f68f3]"><UpDown className="h-[24px] w-[16px] text-white" /></div>
  </div>
);
const Field = ({ children, className = "" }) => (
  <div className={"flex h-[42px] shrink-0 items-center border border-[#b4b4b4] bg-white pt-[4px] pl-[7px] tracking-[-0.200px] " + className}>{children}</div>
);
const Stepper = ({ className }) => (
  <div className={"flex h-[42px] w-[23px] shrink-0 items-center justify-center rounded-[11px] border border-[#cfcfcf] bg-white shadow-[0_1px_1px_rgba(0,0,0,0.25)] " + className}>
    <svg viewBox="0 0 12 26" className="h-[26px] w-[12px]" fill="none" stroke="#444" strokeWidth="2.400" strokeLinecap="round" strokeLinejoin="round"><path d="M1.500 7L6 2l4.500 5M1.500 19L6 24l4.500-5" /></svg>
  </div>
);
const Push = ({ children, primary, className = "" }) => (
  <div className={"flex h-[40px] w-[166px] shrink-0 items-center justify-center rounded-[7px] border shadow-[0_1px_1px_rgba(0,0,0,0.2)] " + (primary ? "border-[#3f79f0] bg-gradient-to-b from-[#6fa5f8] to-[#1c64f4] text-white " : "border-[#cccccc] bg-white ") + className}>{children}</div>
);

const Dialog = () => (
  <div className="absolute top-[552px] left-[1430px] h-[822px] w-[1012px] overflow-hidden rounded-[11px] bg-[#ececec] text-[26px] text-[#242424]">
    <div className="relative flex h-[43px] items-center border-b-2 border-[#b2b2b2] bg-gradient-to-b from-[#e7e7e7] to-[#cccccc] pl-[16px]">
      <div className="flex gap-[16px] pt-[2px]">
        <div className="h-[24px] w-[24px] rounded-full border border-[#d9544a] bg-[#ee6a5f]" />
        <div className="h-[24px] w-[24px] rounded-full border border-[#dba23b] bg-[#f5be4f]" />
        <div className="h-[24px] w-[24px] rounded-full border border-[#51a83c] bg-[#61c455]" />
      </div>
      <div className="absolute inset-x-0 pt-[4px] text-center tracking-[-0.250px] text-[#4a4a4a]">Change Pitch</div>
    </div>
    <div className="mt-[12px] h-[36px] text-center leading-[36px] tracking-[-0.200px]">Change Pitch without Changing Tempo</div>
    <div className="mt-[18px] h-[36px] text-center leading-[36px]">Estimated Start Pitch: D9 (9600.000 Hz)</div>
    <div className="mt-[17px] h-[29px] pl-[38px] text-[22px] leading-[28px]">Pitch</div>
    <div className="mx-[16px] h-[156px] rounded-[8px] border border-[#d6d6d6] bg-[#e2e2e2] pt-[25px]">
      <div className="flex h-[54px] items-center pl-[139px]">
        <span className="w-[79px]">from</span>
        <Combo>D</Combo>
        <Field className="ml-[22px] w-[64px] ring-[6px] ring-[#86a7e8]"><span className="-ml-[2px] bg-[#b3d3fb] px-[2px] leading-[33px] text-black">9</span></Field>
        <Stepper className="ml-[8px]" />
        <span className="ml-[30px] w-[48px]">to</span>
        <Combo>D♯/E♭</Combo>
        <Field className="ml-[21px] w-[64px]">9</Field>
        <Stepper className="ml-[7px]" />
      </div>
      <div className="mt-[16px] flex items-center pl-[245px]"><span className="w-[309px] tracking-[-0.150px] whitespace-nowrap">Semitones (half-steps):</span><Field className="w-[190px]">1.35</Field></div>
    </div>
    <div className="mt-[29px] h-[28px] pl-[38px] text-[22px] leading-[28px]">Frequency</div>
    <div className="mx-[16px] h-[221px] rounded-[8px] border border-[#d6d6d6] bg-[#e2e2e2] pt-[32px]">
      <div className="flex items-center pl-[194px]"><span className="w-[82px]">from</span><Field className="w-[190px]">9600.000</Field><span className="ml-[27px] w-[49px]">to</span><Field className="w-[190px]">10379.232</Field><span className="ml-[25px]">Hz</span></div>
      <div className="mt-[22px] flex items-center pl-[285px]"><span className="w-[227px] tracking-[-0.200px] whitespace-nowrap">Percent Change:</span><Field className="w-[190px]">8.117</Field></div>
      <div className="mt-[27px] flex h-[32px] items-center px-[27px]">
        <div className="-mr-[1px] ml-[8px] h-[6px] w-[463px] rounded-l-full bg-[#4a87f5]" />
        <div className="h-[31px] w-[31px] shrink-0 rounded-full border border-[#c8c8c8] bg-white shadow-[0_1px_2px_rgba(0,0,0,0.3)]" />
        <div className="h-[6px] w-[422px] rounded-r-full bg-[#b2b2b2]" />
      </div>
    </div>
    <div className="mt-[32px] flex h-[32px] items-center pl-[14px]"><div className="-mt-[2px] h-[28px] w-[28px] rounded-[6px] border border-[#bdbdbd] bg-white" /><span className="ml-[8px] tracking-[-0.200px]">Use high quality stretching (slow)</span></div>
    <div className="mt-[48px] flex items-center pl-[49px]">
      <Push>Manage</Push><Push className="ml-[24px]">Preview</Push>
      <Push className="ml-[136px]">Cancel</Push>
      <Push primary className="ml-[26px]">OK</Push>
      <div className="ml-[45px] flex h-[42px] w-[42px] items-center justify-center rounded-full bg-[#6f9cf7] text-[30px] font-semibold text-white">?</div>
    </div>
  </div>
);

/* ---------- dock ---------- */

const Badge = ({ children }) => <div className="absolute -top-[9px] right-[4px] flex h-[27px] min-w-[27px] items-center justify-center rounded-full bg-[#e05548] px-[4px] text-[17px] tracking-[-0.500px] text-white">{children}</div>;

const I = ({ children }) => <svg viewBox="0 0 64 64" className="h-[64px] w-[64px]">{children}</svg>;
const Office = ({ c1, c2, c3, l }) => (
  <I><rect x="3" y="3" width="58" height="58" rx="11" fill="#fff" /><rect x="20" y="12" width="32" height="13" fill={c1} /><rect x="20" y="25" width="32" height="13" fill={c2} /><rect x="20" y="38" width="32" height="13" fill={c3} /><rect x="8" y="20" width="24" height="24" rx="2" fill={c3} /><text x="20" y="39" textAnchor="middle" fontSize="19" fontWeight="700" fill="#fff">{l}</text></I>
);

const dockA = [
  [<I><rect x="2" y="5" width="60" height="55" rx="4" fill="#e9eff7" /><path d="M6 5h28c-5 12-6 20-6 30h8c0 10 0 18 2 25H6a4 4 0 0 1-4-4V9a4 4 0 0 1 4-4z" fill="#3b9cf3" /><path d="M18 20v7M45 20v7M14 40c10 12 27 12 36 0" stroke="#123" strokeWidth="2.500" fill="none" /></I>, true],
  [<I>
    <defs><radialGradient id="orb"><stop offset="0" stopColor="#e8ffff" /><stop offset=".18" stopColor="#79d8f0" /><stop offset=".5" stopColor="#5a3c9c" /><stop offset="1" stopColor="#150d2c" /></radialGradient></defs>
    <circle cx="32" cy="32" r="30.500" fill="#e8e8ec" /><circle cx="32" cy="32" r="28" fill="url(#orb)" />
    <path d="M13 18c8-12 22-15 30-12-1 10-6 18-13 24-2-8-8-12-17-12z" fill="#cf2f86" opacity=".75" />
    <path d="M32 32c4 8 4 18 0 25-6-7-5-16 0-25zM32 32c8-6 18-6 25-2-6 6-16 7-25 2z" fill="#55e0d8" opacity=".8" />
    <path d="M32 32c-8 2-18 0-25 6 8 5 18 2 25-6z" fill="#e06ad0" opacity=".8" />
  </I>, false],
  [<I><circle cx="32" cy="32" r="30.500" fill="#a9b3ba" stroke="#dfe5e9" /><path d="M44 14c-12 2-19 12-22 20l7 7c8-3 17-11 19-23zM20 28l-9 5 6 2zM31 43l-3 9-3-6zM19 40l-7 11 11-7z" fill="#3c4248" /><circle cx="37" cy="25" r="3.500" fill="#a9b3ba" /></I>, false],
  [<I><circle cx="32" cy="32" r="31" fill="#f0f3f6" /><circle cx="32" cy="32" r="28" fill="#2a9bef" /><circle cx="32" cy="32" r="24" fill="none" stroke="#bfe2fb" strokeWidth="3" strokeDasharray="1 4" /><path d="M50 14L36 36l-7-7z" fill="#ee3b30" /><path d="M14 50l15-21 7 7z" fill="#f3f3f3" /></I>, true],
  [<I><path d="M52 8l6 6v38l-8 4z" fill="#67b56b" /><path d="M8 7l44-6v54L15 64z" fill="#a67c45" /><circle cx="31" cy="31" r="15" fill="none" stroke="#8a6332" strokeWidth="2" /><path d="M24 24c0-6 12-6 12 0s-3 7 3 12H22c5-4 2-6 2-12z" fill="#8a6332" /></I>, false],
  [<I><rect x="3" y="4" width="58" height="56" rx="10" fill="#f8f8f8" /><path d="M32 32L11 20a24 24 0 0 1 43 1H32z" fill="#de4b3e" /><path d="M11 20a24 24 0 0 0 20 36l11-18z" fill="#3ba358" /><path d="M54 21a24 24 0 0 1-23 35l11-19c4-8 0-14-3-16z" fill="#fbc934" /><circle cx="32" cy="32" r="11.500" fill="#fff" /><circle cx="32" cy="32" r="9" fill="#4c8bf5" /></I>, true],
  [<I><path d="M4 6l52-6 4 54-46 10z" fill="#f5f7fa" stroke="#fff" strokeWidth="3" strokeDasharray="3 2" /><path d="M9 10l44-5 3 45-40 8z" fill="#6eaee6" /><path d="M14 14c7 3 10 8 14 15 6-2 12-2 16 1-3 2-4 4-6 8 4 2 5 6 3 9-5-2-10-4-14-4-4-4-6-8-7-12-4-4-6-11-6-17z" fill="#5a3b22" /><path d="M37 28c3-3 8-2 10 2l-7 3z" fill="#f4f1e6" /><circle cx="46" cy="50" r="10" fill="none" stroke="#4a6a90" strokeWidth="2" /></I>, true, "31,321"],
  [<I><path d="M4 8l48-7 9 58-45 5z" fill="#fafafa" /><path d="M4 8l48-7 2 11L6 19z" fill="#fbd043" /><path d="M9 27l44-5M10 34l44-5M11 41l44-5M12 48l44-5M13 55l44-5" stroke="#d5d5d5" /></I>, false],
  [<I><path d="M5 8l50-4 4 48-48 9z" fill="#fcfcfc" /><path d="M5 8l50-4 1 15L6 24z" fill="#d8463c" /><text x="26" y="20" fontSize="12" fill="#fff" textAnchor="middle">SEP</text><text x="33" y="51" fontSize="31" fill="#333" textAnchor="middle">26</text><path d="M11 61l48-9v4l-46 7z" fill="#555" /></I>, false, "1"],
  [<I><circle cx="32" cy="32" r="31" fill="#f7f7f7" />{["#f7a531", "#f3d23c", "#a4c957", "#56b881", "#63a6dc", "#8f7cc9", "#c77cb4", "#ec6a4d"].map((c, i) => <rect key={c} x="24" y="6" width="16" height="26" rx="8" fill={c} opacity=".85" transform={"rotate(" + i * 45 + " 32 32)"} />)}</I>, false],
  [<I><path d="M6 8l46-6 6 54-44 7z" fill="#fbfbfb" stroke="#ccc" /><circle cx="14" cy="18" r="4.500" fill="#f29a38" /><circle cx="16" cy="30" r="4.500" fill="#3f9cf0" /><circle cx="17" cy="41" r="4.500" fill="#6fcf53" /><circle cx="19" cy="52" r="4.500" fill="#b768db" /><path d="M23 19l26-3M25 31l26-3M27 42l26-3M29 53l26-3" stroke="#ccc" /></I>, false, "2"],
  [<I><path d="M3 10l50-8 8 50-48 10z" fill="#eee9d8" /><path d="M3 10l18-3 6 20-20 8z" fill="#8cc972" /><path d="M7 44l14-6 8 20-16 4z" fill="#f5b7b4" /><path d="M20 7l8-1 24 50-9 2z" fill="#f7cf4d" /><path d="M40 4l13-2 5 30z" fill="#a7d68a" /><circle cx="18" cy="40" r="9" fill="#2f7be8" /><path d="M18 33l4 13-4-3-4 3z" fill="#fff" /><circle cx="48" cy="46" r="15" fill="#fff" stroke="#888" /><path d="M48 32l2 4h-4z" fill="#e33" /><text x="48" y="51" fontSize="12" textAnchor="middle" fill="#333">3D</text></I>, true],
  [<I><path d="M32 4c17 0 30 10 30 24S49 50 32 50c-4 0-8 0-12-2-3 6-8 9-14 9 4-5 4-9 4-14C5 39 2 34 2 28 2 14 15 4 32 4z" fill="#3a9cf6" /><path d="M44 30c11 0 19 7 19 15 0 5-3 9-6 11 0 3 0 5 3 7-5 0-8-1-10-4-16 2-24-6-24-14s7-15 18-15z" fill="#f4f8ff" /><g fill="#1c5fb8"><circle cx="36" cy="45" r="3" /><circle cx="44" cy="45" r="3" /><circle cx="52" cy="45" r="3" /></g></I>, false, "78"],
  [<I><rect x="2" y="5" width="54" height="48" rx="8" fill="#5fd35b" /><rect x="9" y="16" width="26" height="25" rx="5" fill="#fff" /><path d="M37 26l14-9v24l-14-9z" fill="#fff" /><circle cx="48" cy="42" r="15" fill="#f7fff7" /><path d="M42 35c-1 9 5 15 14 15l1-4-5-3-3 2c-2-1-4-3-4-5l2-3-3-4z" fill="#43c043" /></I>, false, "30"],
  [<I><path d="M6 8l50-7-6 59-35 4z" fill="#fbfbfb" /><path d="M6 8l50-7-1 11L8 19z" fill="#f29a38" /><text x="10" y="16" fontSize="8" fill="#fff" transform="rotate(-7 10 16)">PAGES</text><rect x="13" y="23" width="22" height="15" fill="#4e9ae6" /><path d="M24 26c5-4 8 5 0 11-8-6-5-15 0-11z" fill="#f48a2c" /><path d="M13 42h28M14 47h27M14 52h26M15 57h24" stroke="#999" /><path d="M52 2l5 1-10 45-4 8 0-9z" fill="#d4882e" /></I>, false],
  [<I><path d="M2 36h8v20h50V52h2v10H2z" fill="#fafafa" /><rect x="10" y="34" width="11" height="22" fill="#e4574a" /><rect x="22" y="22" width="11" height="34" fill="#f4a13e" /><rect x="35" y="5" width="11" height="51" fill="#5fc95a" /><rect x="48" y="15" width="11" height="41" fill="#3f9bea" /></I>, true],
  [<I><path d="M8 3h48v20H8z" fill="#49a8ee" /><path d="M14 5h36v16H14z" fill="#f7f7f7" /><circle cx="26" cy="14" r="5" fill="#58b85a" /><path d="M3 22h58l-3 6H6z" fill="#2e8be0" /><path d="M30 28h4v28h-4z" fill="#c8d6e2" /><ellipse cx="32" cy="58" rx="14" ry="5" fill="#d5e3ee" /></I>, false],
  [<I><circle cx="32" cy="32" r="31" fill="#fbeff0" /><circle cx="32" cy="32" r="28" fill="#f04a5c" /><path d="M14 16h13l23 24v9H38L14 25zM14 33l16 16H14zM34 15h16v16z" fill="#fff" /></I>, false],
  [<I>
    <defs><linearGradient id="note" x1="0" y1="1" x2="1" y2="0"><stop offset="0" stopColor="#8a5cf0" /><stop offset="1" stopColor="#f0506a" /></linearGradient></defs>
    <circle cx="32" cy="32" r="31" fill="url(#note)" /><circle cx="32" cy="32" r="28.500" fill="#fbf7fb" /><path d="M25 19l22-5v26c0 9-13 9-12 1 1-5 5-6 8-6V22l-14 3v20c0 9-13 9-12 1 1-5 5-6 8-6z" fill="url(#note)" />
  </I>, true],
  [<I><circle cx="32" cy="32" r="31" fill="#e8f3fb" /><circle cx="32" cy="32" r="28.500" fill="#2b95f0" /><path d="M36 15L20 45M29 15l17 31M13 39h24M43 39h9M19 47l-3 5" stroke="#fff" strokeWidth="4.500" strokeLinecap="round" /></I>, false],
  [<I><rect x="2" y="4" width="60" height="58" rx="3" fill="#a9b0b5" /><circle cx="32" cy="34" r="25" fill="#2a2c2e" /><circle cx="32" cy="34" r="20" fill="none" stroke="#b9bec2" strokeWidth="5" strokeDasharray="3 1.500" /><circle cx="32" cy="34" r="16" fill="#3a3d40" stroke="#c7cbce" strokeWidth="2" /><path d="M32 34V18M32 34l14 8M32 34l-14 8" stroke="#d0d4d7" strokeWidth="3" /></I>, true, "1"],
];

const dockB = [
  [<div className="flex h-[58px] w-[58px] items-center justify-center rounded-[12px] bg-[#713a9c]"><FaGithub className="h-[50px] w-[50px] text-white" /></div>, true],
  [<I><path d="M8 38C4 8 18 1 32 1s28 7 24 37" fill="none" stroke="#1420e0" strokeWidth="6" /><path d="M17 56V34l3-6 3 6 3-16 3 12 3-14 3 14 3-12 3 16 3-6 3 6v22z" fill="#f5b53a" /><path d="M16 45l3-4 3 5 3-6 3 6 4-7 3 7 4-6 3 5 3-5 3 5v6H16z" fill="#ee3a22" /><path d="M12 26h6v32h-6C-4 54-4 32 12 26zM52 26h-6v32h6c16-4 16-28 0-32z" fill="#1420e0" /></I>, true],
  [<I><path d="M8 4h48l8 9H0z" fill="#53120d" /><rect x="0" y="13" width="64" height="46" fill="#3a0c0a" /><path d="M24 28c-9 0-8 8-10 14-1 3-3 4-6 4M12 36h8" fill="none" stroke="#fff" strokeWidth="4" /></I>, true],
  [<I><rect x="1" y="1" width="62" height="62" rx="18" fill="#4a8cf8" /><rect x="13" y="22" width="26" height="21" rx="4" fill="#fff" /><path d="M41 29l10-7v21l-10-7z" fill="#fff" /></I>, true],
  [<Office c1="#4ea3ea" c2="#2f72cd" c3="#1e4da0" l="W" />, true],
  [<I><rect x="3" y="3" width="58" height="58" rx="11" fill="#fff" /><circle cx="34" cy="32" r="20" fill="#e2633f" /><path d="M34 12a20 20 0 0 1 20 20H34z" fill="#f4a084" /><rect x="8" y="20" width="24" height="24" rx="2" fill="#c6452a" /><text x="20" y="39" textAnchor="middle" fontSize="19" fontWeight="700" fill="#fff">P</text></I>, true],
  [<I><circle cx="32" cy="38" r="26" fill="#e9e9ef" /><circle cx="32" cy="38" r="23" fill="#4b5578" /><path d="M10 44h44c-3 10-12 16-22 16s-19-6-22-16z" fill="#1d2440" /><path d="M14 42c8-8 14-6 17-12 4 2 6 8 10 10l9 8c-10 4-28 4-36-6z" fill="#8a6a5c" /><path d="M27 0h10v16h7L32 27 20 16h7z" fill="#c3c9ca" /></I>, true],
  [<I><rect x="1" y="5" width="62" height="55" rx="3" fill="#222" /><rect x="4" y="8" width="56" height="49" fill="#173c36" /><path d="M4 20h56M4 32h56M4 44h56M18 8v49M32 8v49M46 8v49" stroke="#2f6b5f" /><path d="M4 34h18l4-18 4 30 3-12h27" fill="none" stroke="#9be8d0" strokeWidth="1.500" /></I>, true],
  [<Office c1="#4cba80" c2="#2b9158" c3="#1b6e40" l="X" />, true],
  [<I><path d="M32 26l31 18-31 20L1 44z" fill="#3a8df5" /><path d="M18 42l26-24L32 4v48l12-12-26-22" fill="none" stroke="#fff" strokeWidth="4.500" /></I>, true],
];

const Sheet = ({ gear, tall }) => (
  <I>
    <rect x="-1" y={tall ? 10 : 18} width="66" height={tall ? 44 : 28} fill="#f7f7f7" stroke="#ccc" />
    <path d={tall ? "M2 18h60M2 26h60M2 34h60M2 42h60M14 14v38M28 14v38M42 14v38" : "M2 24h60M2 30h60M2 36h60M2 41h60M14 20v24M28 20v24M42 20v24"} stroke="#c4c4c4" />
    {gear ? <g><circle cx="10" cy="20" r="6" fill="#aaa" /><rect x="42" y="44" width="22" height="20" fill="#9aa0a4" /><circle cx="53" cy="54" r="7" fill="none" stroke="#333" strokeWidth="4" strokeDasharray="2.500 1" /></g> : <g><rect x="42" y="44" width="22" height="20" fill="#fff" /><path d="M44 54h5v9h-5z" fill="#e4574a" /><path d="M49 50h5v13h-5z" fill="#f4a13e" /><path d="M54 43h5v20h-5z" fill="#5fc95a" /><path d="M59 47h4v16h-4z" fill="#3f9bea" /></g>}
  </I>
);

const DockItem = ({ item: [icon, dot, badge] }) => (
  <div className="relative flex w-[76.700px] shrink-0 flex-col items-center pt-[12px]">
    <div className="flex h-[64px] w-[64px] items-center justify-center">{icon}</div>
    {dot && <div className="mt-[6px] h-[8px] w-[8px] rounded-full bg-black/80" />}
    {badge && <div className="absolute top-[16px] right-[2px]"><Badge>{badge}</Badge></div>}
  </div>
);

const Dock = () => (
  <div className="absolute top-[1706px] left-[58px] flex h-[94px] w-[2764px] rounded-t-[12px] bg-[linear-gradient(90deg,#53708f_0px,#4c6ba0_140px,#5560a0_250px,#4a78a8_420px,#4a92b6_600px,#4a86b8_820px,#6a86b0_930px,#66688f_1030px,#9b7f90_1200px,#a58c5c_1330px,#a48d48_1450px,#9686a8_1570px,#8c78c0_1700px,#b078a4_1850px,#ca6f7c_1950px,#d89a62_2080px,#f98c3e_2190px,#f99e36_2320px,#f8a834_2500px,#f3a744_2640px,#b5a592_2764px)] pl-[6px]">
    {dockA.map((d, i) => <DockItem key={i} item={d} />)}
    <div className="flex w-[33px] shrink-0 items-center justify-center"><div className="h-[46px] w-[2px] bg-black/25" /></div>
    {dockB.map((d, i) => <DockItem key={i} item={d} />)}
    <div className="flex w-[33px] shrink-0 items-center justify-center"><div className="h-[70px] w-[2px] bg-black/25" /></div>
    <DockItem item={[<Sheet tall />]} />
    <DockItem item={[<Sheet tall gear />]} />
    <DockItem item={[<Sheet />]} />
    <DockItem item={[<I><path d="M7 8h50l-8 54c-4 3-30 3-34 0z" fill="#dcdcdc" /><path d="M14 14l6 46M26 14l3 47M38 14l-2 47M50 14l-6 46" stroke="#bcbcbc" strokeWidth="1.500" /><path d="M8 12l6-10 8 6 6-9 9 8 8-6 6 8 5 4c-10 6-40 6-48-1z" fill="#f3f3f3" stroke="#8a8a8a" /></I>]} />
  </div>
);

export default function App() {
  return (
    <div className="relative h-[1800px] w-[2880px] overflow-hidden bg-[#07060c] font-['Inter',sans-serif]">
      <MenuBar />
      <div className="h-[6px] bg-[repeating-linear-gradient(90deg,transparent_0px,rgba(0,0,0,0.45)_9px,transparent_17px,rgba(0,0,0,0.3)_31px,transparent_40px),linear-gradient(90deg,#8a1a14_0px,#c02a20_200px,#3a1a20_330px,#a02018_420px,#c02818_620px,#6a6a20_800px,#8a8a2a_880px,#200a0a_950px,#30101a_1200px,#b02018_1440px,#c84a24_1700px,#d8b040_1900px,#c8a83a_2250px,#c03a90_2400px,#3a50b8_2480px,#8a4ab0_2600px,#5a9a3a_2720px,#a03a20_2880px)]" />
      <div>
        <BrowserBar />
        <TabBar />
        <div className="flex">
          <Sidebar />
          <WebPage />
        </div>
      </div>
      <div className="absolute top-[191px] left-[500px] h-[1459px] w-[1880px] rounded-[12px] shadow-[0_0_2px_rgba(0,0,0,0.5),0_24px_80px_rgba(0,0,0,0.32)]" />
      <EditorWindow />
      <div className="absolute top-[552px] left-[1430px] h-[822px] w-[1012px] rounded-[11px] shadow-[0_0_2px_rgba(0,0,0,0.6),0_36px_90px_rgba(0,0,0,0.55)]" />
      <Dialog />
      <div className="absolute bottom-0 left-0 h-[98px] w-full bg-[linear-gradient(90deg,#08050c_0px,#04040a_300px,#12203a_420px,#0a2438_600px,#202030_1056px,#a9a6a4_1060px,#a3a0a0_2313px,#8a3410_2316px,#c05a14_2600px,#a02a2a_2790px,#8048a0_2880px)]" />
      <div className="absolute top-[1701px] left-[222px] text-[24px] leading-[18px] font-medium whitespace-nowrap text-white">Data brief.docx</div>
      <div className="absolute top-[1706px] left-[2800px] h-[94px] w-[60px] rounded-tr-[30px] bg-[#c4c4c4]">
        <div className="flex h-full w-[40px] flex-col justify-center bg-[#55555a] pl-[23px] text-[11px] leading-[18px] font-bold text-white"><span>O</span><span>LE</span><span>AG</span><span>AL</span></div>
      </div>
      <Dock />
    </div>
  );
}
